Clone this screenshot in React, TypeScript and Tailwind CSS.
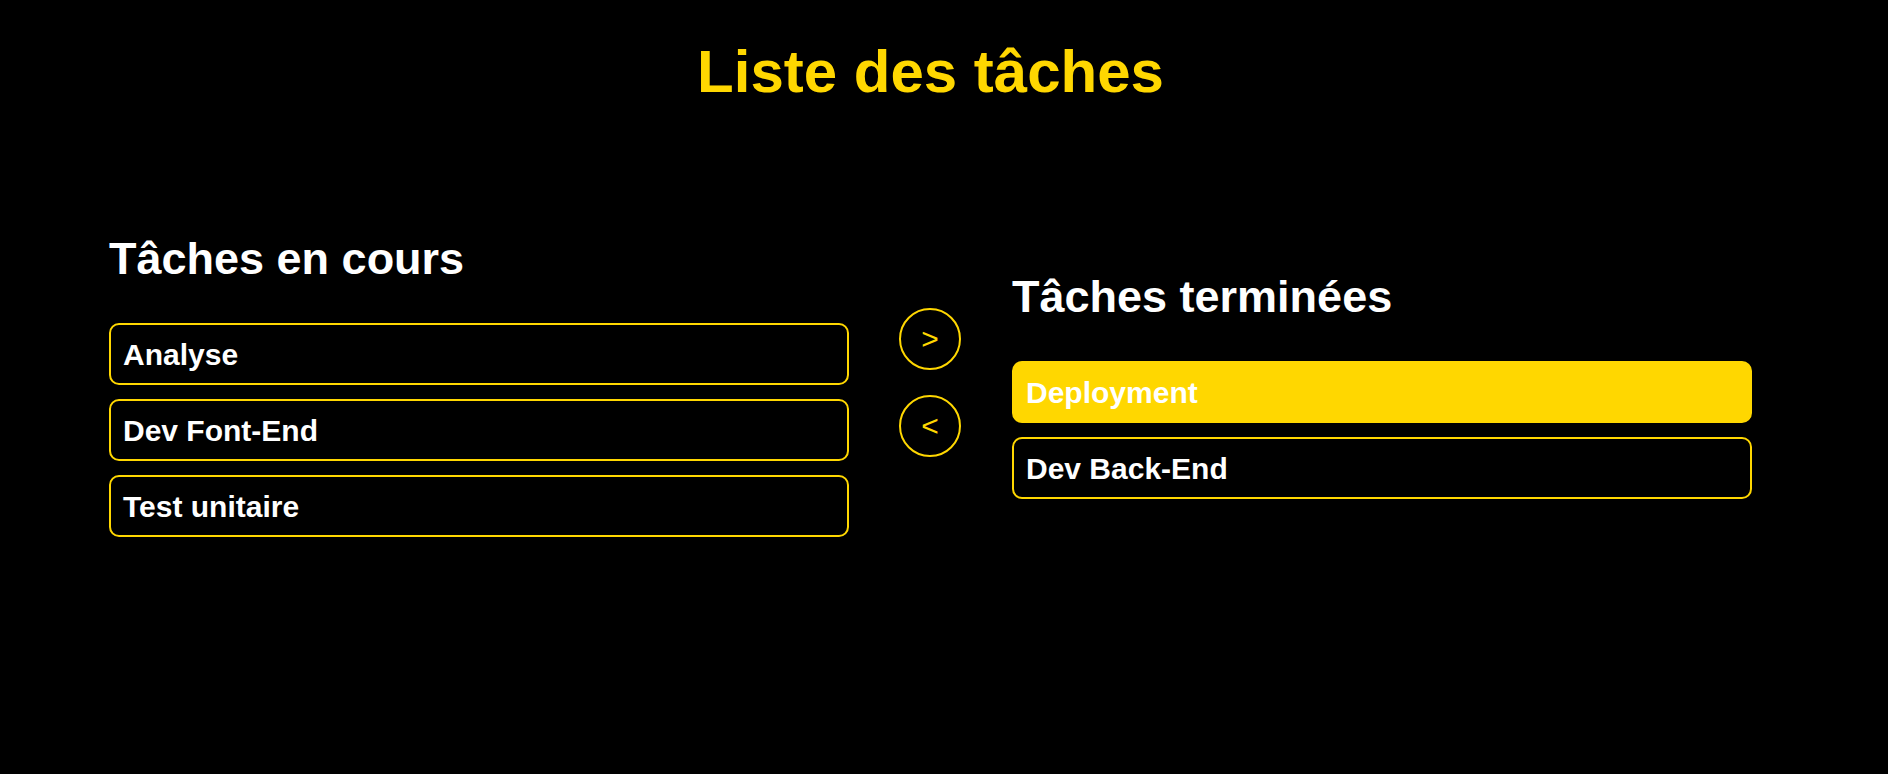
import React from "react";

const font = { fontFamily: '"Liberation Sans", Arial, sans-serif' };

function Item({ label, active = false }: { label: string; active?: boolean }) {
  return (
    <div
      className={
        "h-[62px] rounded-[10px] border-2 px-[12px] flex items-center text-[30px] font-bold leading-[35px] text-white " +
        (active ? "bg-[#FFD700] border-[#FFD700]" : "bg-black border-[#FFD700]")
      }
    >
      {label}
    </div>
  );
}

function Column({ title, items, activeIndex }: { title: string; items: string[]; activeIndex?: number }) {
  return (
    <div className="w-[740px] flex flex-col pt-[6px]">
      <h2 className="text-[45px] font-bold leading-[52px] text-white mb-[38px]">{title}</h2>
      <div className="flex flex-col gap-[14px]">
        {items.map((it, i) => (
          <Item key={it} label={it} active={i === activeIndex} />
        ))}
      </div>
    </div>
  );
}

export default function App() {
  return (
    <div className="min-h-[774px] w-full bg-black pr-[27px]" style={font}>
      <h1 className="pt-[37px] text-center text-[60px] font-bold leading-[69px] text-[#FFD700]">
        Liste des tâches
      </h1>
      <div className="mt-[121px] flex items-center justify-center">
        <Column title="Tâches en cours" items={["Analyse", "Dev Font-End", "Test unitaire"]} />
        <div className="ml-[50px] mr-[51px] flex flex-col gap-[25px]">
          <button className="w-[62px] h-[62px] rounded-full border-2 border-[#FFD700] text-[#FFD700] text-[30px] leading-none flex items-center justify-center bg-black">
            &gt;
          </button>
          <button className="w-[62px] h-[62px] rounded-full border-2 border-[#FFD700] text-[#FFD700] text-[30px] leading-none flex items-center justify-center bg-black">
            &lt;
          </button>
        </div>
        <Column title="Tâches terminées" items={["Deployment", "Dev Back-End"]} activeIndex={0} />
      </div>
    </div>
  );
}
